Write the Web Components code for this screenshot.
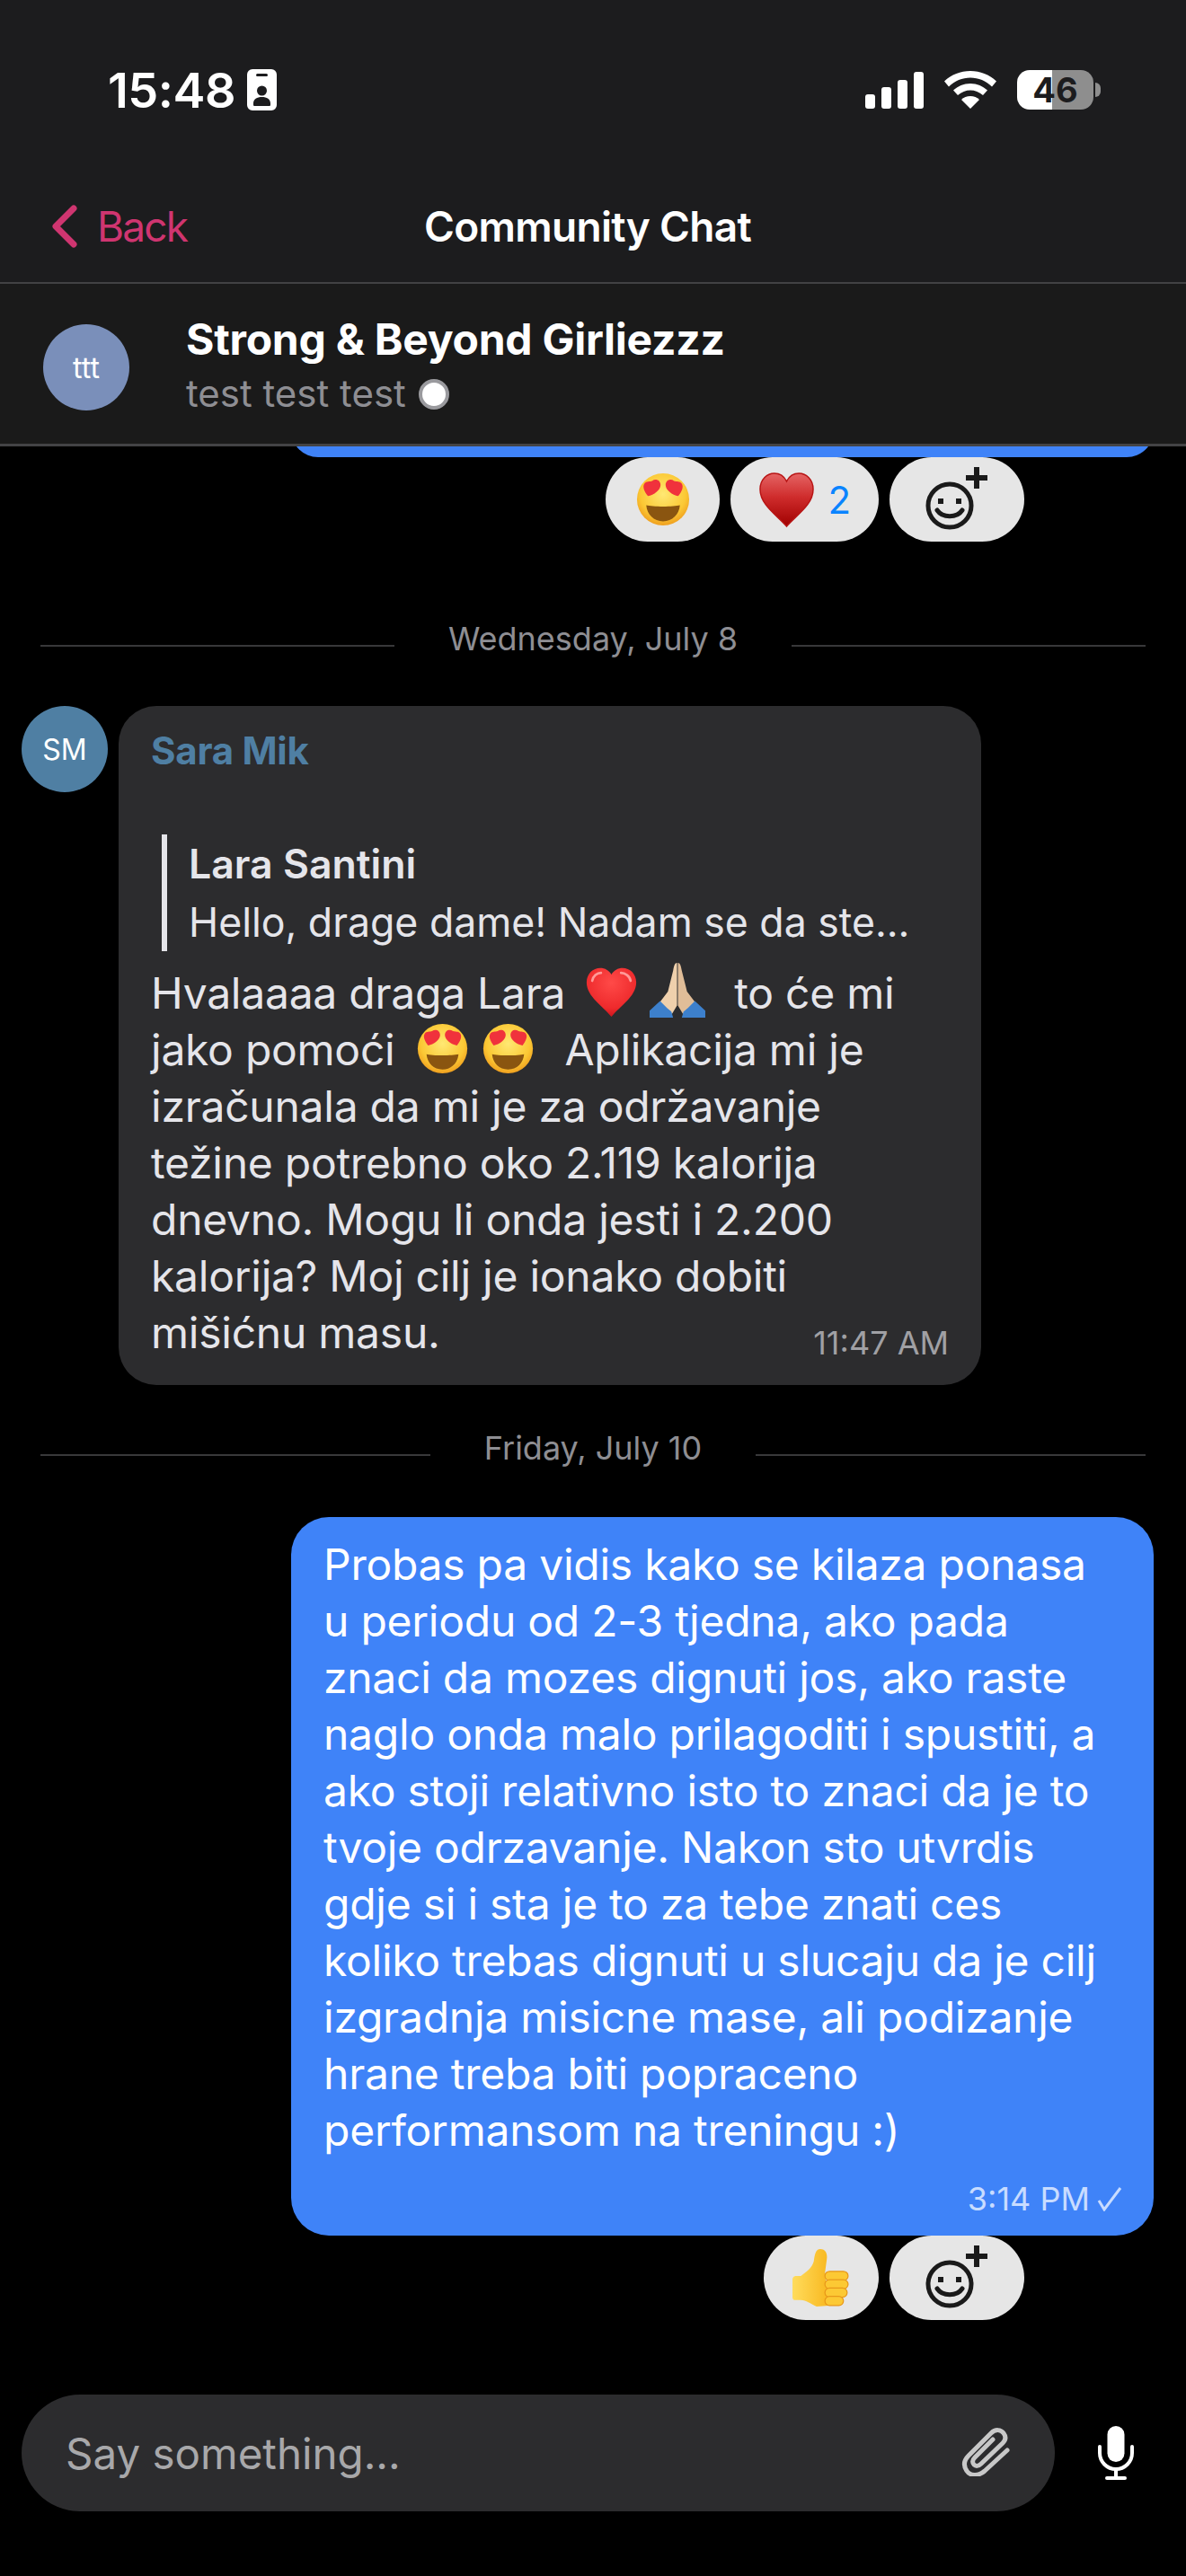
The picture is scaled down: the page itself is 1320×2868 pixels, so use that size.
<!DOCTYPE html>
<html>
<head>
<meta charset="utf-8">
<style>
html,body{margin:0;padding:0;background:#000;}
</style>
</head>
<body>
<chat-screen>
  <status-bar slot="top" time="15:48" battery="46"></status-bar>
  <nav-bar slot="top" title="Community Chat"></nav-bar>
  <chat-header slot="top" name="Strong &amp; Beyond Girliezzz" sub="test test test"></chat-header>

  <chat-bubble class="sliver" mine></chat-bubble>
  <reaction-row style="margin-right:180px">
    <reaction-pill><chat-emoji name="eyes" size="60"></chat-emoji></reaction-pill>
    <reaction-pill count="2"><chat-emoji name="heart" size="63"></chat-emoji></reaction-pill>
    <reaction-pill add></reaction-pill>
  </reaction-row>

  <date-sep style="margin-top:88px" line-gap="442">Wednesday, July 8</date-sep>

  <incoming-row initials="SM" style="margin-top:55px">
    <chat-bubble name="Sara Mik" time="11:47 AM" quote-name="Lara Santini" quote="Hello, drage dame! Nadam se da ste...">Hvalaaaa draga Lara <chat-emoji name="redheart" size="57" style="margin-left:10px"></chat-emoji> <chat-emoji name="pray" size="62" style="margin-right:6px"></chat-emoji>&nbsp; to će mi<br>jako pomoći <chat-emoji name="eyes" size="57" style="margin-left:11px"></chat-emoji> <chat-emoji name="eyes" size="57" style="margin:0 8px 0 3px"></chat-emoji>&nbsp; Aplikacija mi je<br>izračunala da mi je za održavanje<br>težine potrebno oko 2.119 kalorija<br>dnevno. Mogu li onda jesti i 2.200<br>kalorija? Moj cilj je ionako dobiti<br>mišićnu masu.</chat-bubble>
  </incoming-row>

  <date-sep style="margin-top:50px" line-gap="362">Friday, July 10</date-sep>

  <chat-bubble mine time="3:14 PM" check style="margin-top:57px">Probas pa vidis kako se kilaza ponasa<br>u periodu od 2-3 tjedna, ako pada<br>znaci da mozes dignuti jos, ako raste<br>naglo onda malo prilagoditi i spustiti, a<br>ako stoji relativno isto to znaci da je to<br>tvoje odrzavanje. Nakon sto utvrdis<br>gdje si i sta je to za tebe znati ces<br>koliko trebas dignuti u slucaju da je cilj<br>izgradnja misicne mase, ali podizanje<br>hrane treba biti popraceno<br>performansom na treningu :)</chat-bubble>
  <reaction-row style="margin-right:180px">
    <reaction-pill><chat-emoji name="thumb" size="66"></chat-emoji></reaction-pill>
    <reaction-pill add></reaction-pill>
  </reaction-row>

  <message-input slot="bottom" placeholder="Say something..."></message-input>
</chat-screen>

<script>
const FONT = `Inter, "Liberation Sans", sans-serif`

const EMOJI = {
  eyes: `<svg viewBox="0 0 64 64"><defs><radialGradient id="f" cx=".5" cy=".4" r=".62"><stop offset="0" stop-color="#ffe873"/><stop offset=".7" stop-color="#fbc834"/><stop offset="1" stop-color="#ee9a1c"/></radialGradient></defs>
    <circle cx="32" cy="32" r="31" fill="url(#f)"/>
    <path d="M12 39c7 2 33 2 40 0-1 11-9 19-20 19s-19-8-20-19z" fill="#8a5510"/>
    <path d="M19 10c4-3 10-1 10 5 0 6-8 12-15 13-4-5-7-11-4-15 2-3 6-2 9-3z" fill="#f0323c"/>
    <path d="M45 10c-4-3-10-1-10 5 0 6 8 12 15 13 4-5 7-11 4-15-2-3-6-2-9-3z" fill="#f0323c"/></svg>`,
  heart: `<svg viewBox="0 0 64 64"><defs><linearGradient id="h" x1="0" y1="0" x2="0" y2="1"><stop offset="0" stop-color="#e56464"/><stop offset=".45" stop-color="#cf2c2c"/><stop offset="1" stop-color="#a00000"/></linearGradient></defs>
    <path d="M32 62C22 50 2 38 2 20 2 9 10 2 18 2c6 0 11 3 14 9 3-6 8-9 14-9 8 0 16 7 16 18 0 18-20 30-30 42z" fill="url(#h)" stroke="#b81414" stroke-width="1.500"/></svg>`,
  redheart: `<svg viewBox="0 0 64 64"><defs><radialGradient id="r" cx=".5" cy=".3" r=".75"><stop offset="0" stop-color="#ff4a48"/><stop offset=".7" stop-color="#ee2a2c"/><stop offset="1" stop-color="#c2101a"/></radialGradient></defs>
    <path d="M32 63C22 50 1 38 1 20 1 9 9 2 18 2c6 0 11 3 14 8 3-5 8-8 14-8 9 0 17 7 17 18 0 18-21 30-31 43z" fill="url(#r)"/>
    <path d="M8 18c1-6 6-10 11-10" fill="none" stroke="#ff9a98" stroke-width="3" stroke-linecap="round"/><path d="M44 8c5 0 11 4 12 10" fill="none" stroke="#ff9a98" stroke-width="3" stroke-linecap="round"/></svg>`,
  pray: `<svg viewBox="0 0 64 64">
    <path d="M31.500 1C29 1 28 4 27 10L21 34 12 46 20 56 25 61 31.500 50z" fill="#efd0ac"/>
    <path d="M32.500 1C35 1 36 4 37 10L43 34 52 46 44 56 39 61 32.500 50z" fill="#e0bd98"/>
    <path d="M12 45L0 56v8h27l-2-7-5-4zM52 45l12 11v8H37l2-7 5-4z" fill="#3d80cc"/></svg>`,
  thumb: `<svg viewBox="0 0 64 64"><defs><linearGradient id="t" x1="0" y1="0" x2="1" y2="0"><stop offset="0" stop-color="#ffdc5c"/><stop offset="1" stop-color="#f8b820"/></linearGradient></defs>
    <path d="M31 1C36 1 39 5 38 12L36 27 40 62 27 63C20 60 16 56 10 56L4 56C2 56 1 55 1 53L1 34C1 31 3 30 5 30L10 30C16 25 22 22 24 14 25 7 26 1 31 1Z" fill="url(#t)"/>
    <g fill="#fcc934" stroke="#e8981a" stroke-width="1.200"><rect x="36" y="25" width="25" height="10" rx="5"/><rect x="36" y="34" width="25" height="10" rx="5"/><rect x="36" y="43" width="24" height="10" rx="5"/><rect x="36" y="52" width="20" height="10" rx="5"/></g></svg>`
}

class ChatEmoji extends HTMLElement {
  constructor(){
    super()
    this.attachShadow({mode:'open'})
    const size = this.getAttribute('size') || 58
    this.shadowRoot.innerHTML = `<style>
      :host{display:inline-block;width:${size}px;height:${size}px;vertical-align:-10px;}
      svg{display:block;width:100%;height:100%;}
    </style>${EMOJI[this.getAttribute('name')]}`
  }
}

class StatusBar extends HTMLElement {
  constructor(){
    super()
    this.attachShadow({mode:'open'})
    this.shadowRoot.innerHTML = `<style>
      :host{display:flex;align-items:center;height:80px;padding:60px 95px 0 120px;font-family:${FONT};color:#fff;}
      .time{font-size:54px;font-weight:600;letter-spacing:-.5px;}
      .id{margin-left:13px;width:33px;height:46px;display:block;}
      .right{margin-left:auto;display:flex;align-items:center;gap:23px;}
      .batt{position:relative;width:85px;height:44px;border-radius:14px;overflow:hidden;background:linear-gradient(90deg,#fff 46%,#8e8e8e 46%);color:#1c1c1e;font-size:38px;font-weight:700;line-height:44px;text-align:center;}
      .nub{width:6px;height:16px;background:#8e8e8e;border-radius:0 8px 8px 0;margin-left:-21px;}
      svg{display:block;}
    </style>
    <span class="time">${this.getAttribute('time')}</span>
    <svg class="id" viewBox="0 0 33 46"><path fill="#fff" fill-rule="evenodd" d="M6 0h21a6 6 0 0 1 6 6v34a6 6 0 0 1-6 6H6a6 6 0 0 1-6-6V6a6 6 0 0 1 6-6zM11.500 5a1.500 1.500 0 0 0 0 3h10a1.500 1.500 0 0 0 0-3zM16.500 18.500a5.500 5.500 0 1 0 0 11 5.500 5.500 0 0 0 0-11zM16.500 31c-5.500 0-9.500 2.500-9.500 7v1.500c0 1 .5 1.500 1.500 1.500h16c1 0 1.500-.5 1.500-1.500V38c0-4.500-4-7-9.500-7z"/></svg>
    <div class="right">
      <svg width="65" height="41" viewBox="0 0 65 41" fill="#fff"><rect y="25" width="11" height="16" rx="3"/><rect x="18" y="17" width="11" height="24" rx="3"/><rect x="36" y="9" width="11" height="32" rx="3"/><rect x="54" width="11" height="41" rx="3"/></svg>
      <svg width="58" height="42" viewBox="0 0 58 42" fill="#fff"><path d="M29 0c11 0 21 4 29 11.500l-5 6C46.500 11 38 7.500 29 7.500S11.500 11 5 17.500l-5-6C8 4 18 0 29 0z"/><path d="M29 14c7.500 0 14 3 19 7.500l-5 5.500c-4-3.500-9-5.500-14-5.500S19 23.500 15 27l-5-5.500C15 17 21.500 14 29 14z"/><path d="M29 28c4 0 7.500 1.500 10 4L29 42 19 32c2.500-2.500 6-4 10-4z"/></svg>
      <div class="batt">46</div>
      <div class="nub"></div>
    </div>`
  }
}

class NavBar extends HTMLElement {
  constructor(){
    super()
    this.attachShadow({mode:'open'})
    this.shadowRoot.innerHTML = `<style>
      :host{display:flex;align-items:center;position:relative;height:176px;padding:50px 0 0 57px;box-sizing:border-box;font-family:${FONT};border-bottom:2px solid #424244;}
      .back{display:flex;align-items:center;gap:21px;color:#cf3570;font-size:46px;letter-spacing:-1.800px;}
      .title{position:absolute;left:0;right:0;text-align:center;color:#fff;font-size:46px;font-weight:600;letter-spacing:-.7px;padding-right:12px;}
      svg{display:block;}
    </style>
    <div class="back"><svg width="30" height="50" viewBox="0 0 30 50"><path d="M25 5L5 25l20 20" fill="none" stroke="#cf3570" stroke-width="7" stroke-linecap="round" stroke-linejoin="round"/></svg>Back</div>
    <div class="title">${this.getAttribute('title')}</div>`
  }
}

class ChatHeader extends HTMLElement {
  constructor(){
    super()
    this.attachShadow({mode:'open'})
    this.shadowRoot.innerHTML = `<style>
      :host{display:flex;align-items:center;height:178px;padding:0 0 0 48px;background:#1a1a1a;font-family:${FONT};border-bottom:3px solid #434345;}
      .av{width:96px;height:96px;border-radius:50%;background:#7a8fba;color:#fff;font-size:32px;display:flex;align-items:center;justify-content:center;margin:8px 63px 0 0;}
      .name{color:#fff;font-size:48px;font-weight:700;letter-spacing:-.25px;line-height:60px;margin-top:2px;}
      .sub{color:#8e8e93;font-size:42px;line-height:54px;margin-top:3px;display:flex;align-items:center;gap:14px;}
      .dot{border-radius:50%;background:#fff;border:4px solid #9a9a9e;box-sizing:border-box;margin-top:2px;width:34px;height:34px;}
    </style>
    <div class="av">ttt</div>
    <div>
      <div class="name">${this.getAttribute('name').replace('&','&amp;')}</div>
      <div class="sub">${this.getAttribute('sub')}<span class="dot"></span></div>
    </div>`
  }
}

class ChatBubble extends HTMLElement {
  constructor(){
    super()
    this.attachShadow({mode:'open'})
    const name = this.getAttribute('name')
    const qn = this.getAttribute('quote-name')
    const time = this.getAttribute('time')
    const sliver = this.classList.contains('sliver')
    this.shadowRoot.innerHTML = `<style>
      :host{display:block;box-sizing:border-box;width:960px;padding:20px 36px 25px;border-radius:42px;background:#2c2c2e;color:#e5e5ea;font-family:${FONT};font-size:48px;line-height:63px;letter-spacing:-.25px;}
      :host([mine]){align-self:flex-end;margin-right:36px;padding:21px 36px 19px;background:#3f83f8;color:#fff;}
      .name{color:#4f7fa3;font-size:42px;font-weight:700;line-height:60px;margin-bottom:63px;}
      .quote{border-left:6px solid #e5e5ea;padding-left:24px;margin:0 0 12px 12px;height:130px;font-size:44.6px;letter-spacing:0;}
      .qn{font-weight:600;line-height:66px;}
      .qt{line-height:64px;}
      .time{display:flex;justify-content:flex-end;align-items:center;gap:8px;font-size:36px;line-height:44px;letter-spacing:0;color:#a0a0a4;margin-top:-42px;}
      :host([mine]) .time{color:#c8dcff;margin:23px -1px 0 0;}
      .time svg{display:block;}
    </style>
    ${name ? `<div class="name">${name}</div>` : ''}
    ${qn ? `<div class="quote"><div class="qn">${qn}</div><div class="qt">${this.getAttribute('quote')}</div></div>` : ''}
    <slot></slot>
    ${time ? `<div class="time"><span>${time}</span>${this.hasAttribute('check') ? `<svg width="28" height="28" viewBox="0 0 28 28"><path d="M2 16l6 10L26 2" fill="none" stroke="#c8dcff" stroke-width="3"/></svg>` : ''}</div>` : ''}`
    if (sliver) { this.style.height = '60px'; this.style.marginTop = '-48px' }
  }
}

class IncomingRow extends HTMLElement {
  constructor(){
    super()
    this.attachShadow({mode:'open'})
    this.shadowRoot.innerHTML = `<style>
      :host{display:flex;align-items:flex-start;gap:12px;padding-left:24px;font-family:${FONT};}
      .av{width:96px;height:96px;border-radius:50%;background:#4f7fa3;color:#fff;font-size:32px;display:flex;align-items:center;justify-content:center;flex:none;}
    </style>
    <div class="av">${this.getAttribute('initials')}</div><slot></slot>`
  }
}

class DateSep extends HTMLElement {
  constructor(){
    super()
    this.attachShadow({mode:'open'})
    const gap = this.getAttribute('line-gap')
    this.shadowRoot.innerHTML = `<style>
      :host{display:flex;align-items:center;justify-content:center;height:40px;padding:0 45px;color:#8e8e93;font-family:${FONT};font-size:36px;}
      i{flex:1;height:2px;background:#38383a;margin-top:16px;}
      span{width:${gap}px;text-align:center;white-space:nowrap;}
    </style><i></i><span><slot></slot></span><i></i>`
  }
}

class ReactionRow extends HTMLElement {
  constructor(){
    super()
    this.attachShadow({mode:'open'})
    this.shadowRoot.innerHTML = `<style>
      :host{display:flex;align-self:flex-end;gap:12px;}
    </style><slot></slot>`
  }
}

class ReactionPill extends HTMLElement {
  constructor(){
    super()
    this.attachShadow({mode:'open'})
    const count = this.getAttribute('count')
    const add = this.hasAttribute('add')
    this.shadowRoot.innerHTML = `<style>
      :host{display:flex;align-items:center;justify-content:center;box-sizing:border-box;height:94px;min-width:127px;padding:0 ${add?18:31}px;gap:14px;border-radius:47px;background:#e6e6e6;font-family:${FONT};font-size:42px;color:#0a84ff;}
      ${add ? ':host{width:150px;}' : ''}
      svg{display:block;}
    </style>
    ${add ? `<svg width="72" height="72" viewBox="0 0 72 72" style="margin-top:-4px"><circle cx="28" cy="45" r="24" fill="none" stroke="#1a1a1a" stroke-width="5"/><rect x="15" y="37" width="6" height="6" fill="#1a1a1a"/><rect x="35" y="37" width="6" height="6" fill="#1a1a1a"/><path d="M14 50c6 9 22 9 28 0" fill="none" stroke="#1a1a1a" stroke-width="5" stroke-linecap="round"/><path d="M58 2v24M46 14h24" stroke="#1a1a1a" stroke-width="6"/></svg>` : '<slot></slot>'}
    ${count ? `<span>${count}</span>` : ''}`
  }
}

class MessageInput extends HTMLElement {
  constructor(){
    super()
    this.attachShadow({mode:'open'})
    this.shadowRoot.innerHTML = `<style>
      :host{display:flex;align-items:center;padding:0 58px 72px 24px;font-family:${FONT};}
      .box{flex:1;height:130px;border-radius:65px;background:#2c2c2e;display:flex;align-items:center;justify-content:space-between;padding:0 50px 0 49px;color:#a8a8aa;font-size:47.500px;}
      .mic{margin-left:48px;}
      svg{display:block;}
    </style>
    <div class="box">${this.getAttribute('placeholder')}
      <svg width="54" height="56" viewBox="0 0 54 56" style="margin-top:-4px"><path d="M51 27L26 50C18 57 9 55 6 50 2 44 3 38 8 33L33 8C38 3 44 4 47 8 50 12 49 16 46 19L22 42C19 45 16 45 14 43 12 41 12 38 15 35L35 15" fill="none" stroke="#c8c8c8" stroke-width="5" stroke-linecap="round" stroke-linejoin="round"/></svg>
    </div>
    <svg class="mic" width="40" height="60" viewBox="0 0 40 60"><rect x="10.500" width="19" height="40" rx="9.500" fill="#fff"/><path d="M2 23v7a18 18 0 0 0 36 0v-7" fill="none" stroke="#fff" stroke-width="4" stroke-linecap="round"/><path d="M20 48v9" stroke="#fff" stroke-width="4"/><path d="M10 58h20" stroke="#fff" stroke-width="4" stroke-linecap="round"/></svg>`
  }
}

class ChatScreen extends HTMLElement {
  constructor(){
    super()
    this.attachShadow({mode:'open'})
    this.shadowRoot.innerHTML = `<style>
      :host{display:flex;flex-direction:column;height:2868px;background:#000;overflow:hidden;}
      .top{background:#1c1c1e;flex:none;}
      .list{flex:1;display:flex;flex-direction:column;overflow:hidden;min-height:0;}
    </style>
    <div class="top"><slot name="top"></slot></div>
    <div class="list"><slot></slot></div>
    <slot name="bottom"></slot>`
  }
}

customElements.define('chat-emoji', ChatEmoji)
customElements.define('status-bar', StatusBar)
customElements.define('nav-bar', NavBar)
customElements.define('chat-header', ChatHeader)
customElements.define('chat-bubble', ChatBubble)
customElements.define('incoming-row', IncomingRow)
customElements.define('date-sep', DateSep)
customElements.define('reaction-row', ReactionRow)
customElements.define('reaction-pill', ReactionPill)
customElements.define('message-input', MessageInput)
customElements.define('chat-screen', ChatScreen)
</script>
</body>
</html>
